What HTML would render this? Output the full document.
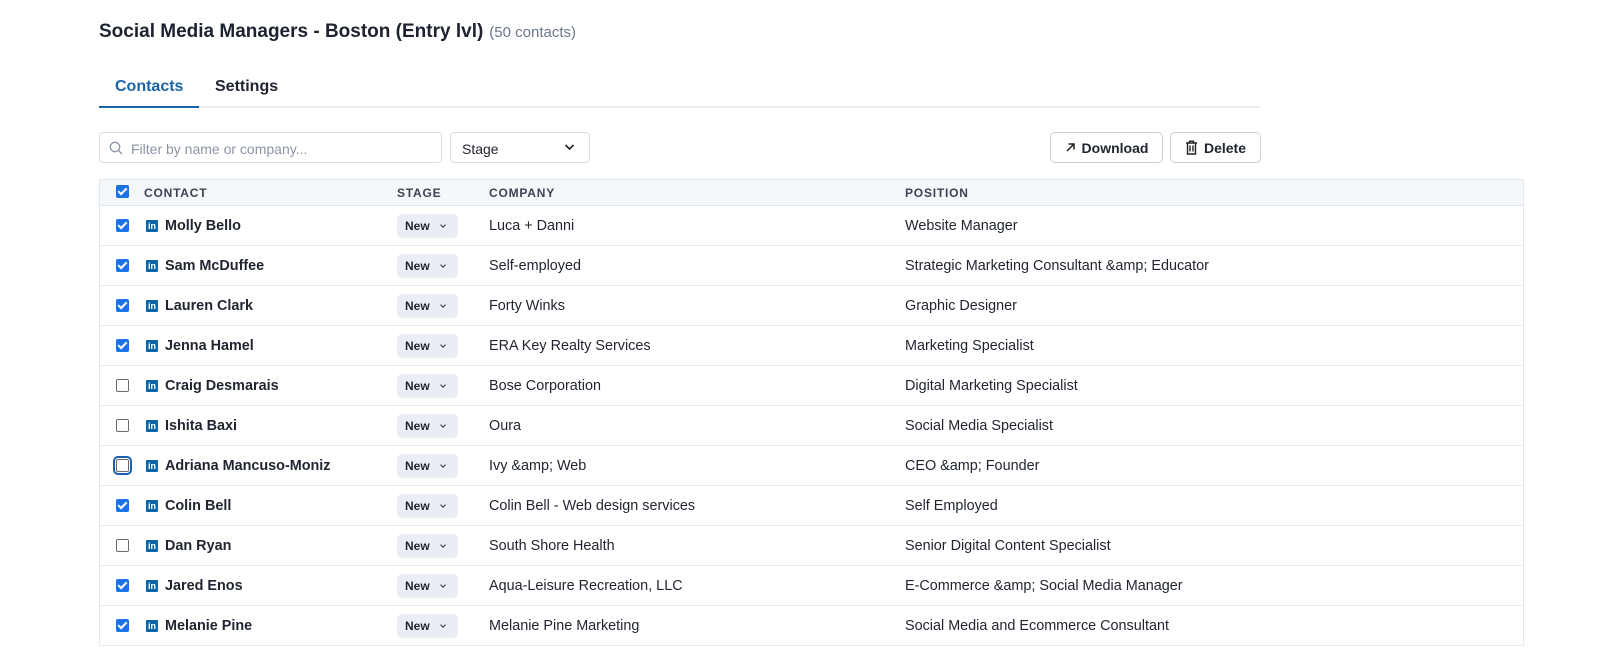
<!DOCTYPE html>
<html><head><meta charset="utf-8"><style>
*{box-sizing:border-box;margin:0;padding:0}
body{width:1601px;height:661px;background:#fff;font-family:"Liberation Sans",sans-serif;color:#1f2430;position:relative;overflow:hidden}
.t{position:absolute;left:99px;top:21px;font-size:19px;font-weight:bold;color:#1c2230}
.t span{font-weight:normal;font-size:15px;color:#6b7689;margin-left:6px}
.tabs{position:absolute;left:99px;top:106px;width:1161px;height:2px;background:#e8edf3}
.tab{position:absolute;top:78px;font-size:16px;font-weight:bold}
.ul{position:absolute;left:99px;top:106px;width:100px;height:2px;background:#1a64a8}
.in{position:absolute;top:132px;height:31px;border:1px solid #d7dee8;border-radius:4px;font-size:14px}
.btn{position:absolute;top:132px;height:31px;border:1px solid #c5d0dd;border-radius:5px;font-size:14px;font-weight:bold;display:flex;align-items:center;justify-content:center;gap:6px}
.tbl{position:absolute;left:99px;top:179px;width:1425px;border:1px solid #e3e8ef;border-bottom:none}
.row{height:40px;border-bottom:1px solid #e8ecf1;position:relative;font-size:14.4px}
.hd{height:26px;background:#f5f8fb;border-bottom:1px solid #e3e8ef;font-size:12px;font-weight:bold;letter-spacing:.8px;color:#3a4352}
.c{position:absolute;top:50%;transform:translateY(-50%);white-space:nowrap}
.cb{position:absolute;left:16px;top:50%;margin-top:-7px;width:13px;height:13px;border-radius:2px}
.on{background:#1a73e8}
.on:after{content:"";position:absolute;left:4px;top:1px;width:3px;height:7px;border:solid #fff;border-width:0 2px 2px 0;transform:rotate(45deg)}
.off{border:1px solid #6b6b6b;background:#fff}
.li{position:absolute;left:46px;top:50%;margin-top:-6px;width:12px;height:12px;background:#0b66a8;color:#fff;font-size:9px;font-weight:bold;line-height:13px;text-align:center;border-radius:1px}
.nm{left:65px;font-weight:bold}
.pill{position:absolute;left:297px;top:50%;margin-top:-12px;width:61px;height:24px;background:#eaeef4;border-radius:5px;font-size:12px;font-weight:bold;line-height:24px;padding-left:8px}
.pill:after{content:"";position:absolute;right:13px;top:9px;width:3px;height:3px;border:solid #333;border-width:0 1.5px 1.5px 0;transform:rotate(45deg)}
</style></head><body>
<div class="t">Social Media Managers - Boston (Entry lvl)<span>(50 contacts)</span></div>
<div class="tabs"></div><div class="ul"></div>
<div class="tab" style="left:115px;color:#1a64a8">Contacts</div>
<div class="tab" style="left:215px">Settings</div>
<div class="in" style="left:99px;width:343px;color:#8a94a6;padding:8px 0 0 31px">Filter by name or company...
<svg style="position:absolute;left:9px;top:8px" width="14" height="14" viewBox="0 0 14 14"><circle cx="6" cy="6" r="4.7" fill="none" stroke="#8a94a6" stroke-width="1.3"/><path d="M9.5 9.5L13 13" stroke="#8a94a6" stroke-width="1.3"/></svg></div>
<div class="in" style="left:450px;width:140px;padding:8px 0 0 11px">Stage
<svg style="position:absolute;right:14px;top:10px" width="11" height="8" viewBox="0 0 11 8"><path d="M1.5 2L5.5 6 9.5 2" fill="none" stroke="#222" stroke-width="1.6"/></svg></div>
<div class="btn" style="left:1050px;width:113px"><svg width="11" height="11" viewBox="0 0 11 11"><path d="M2 9L9 2M3.5 2H9V7.5" fill="none" stroke="#222" stroke-width="1.5"/></svg>Download</div>
<div class="btn" style="left:1170px;width:91px"><svg width="13" height="15" viewBox="0 0 13 15"><path d="M1 3H12M4.5 3V1.2H8.5V3M2.5 3V14H10.5V3M5 5.5V11.5M8 5.5V11.5" fill="none" stroke="#222" stroke-width="1.4"/></svg>Delete</div>
<div class="tbl">
<div class="row hd"><div class="cb on" style="margin-top:-8px"></div><div class="c" style="left:44px">CONTACT</div><div class="c" style="left:297px">STAGE</div><div class="c" style="left:389px">COMPANY</div><div class="c" style="left:805px">POSITION</div></div>
<div class="row"><div class="cb on"></div><div class="li">in</div><div class="c nm">Molly Bello</div><div class="pill">New</div><div class="c" style="left:389px">Luca + Danni</div><div class="c" style="left:805px">Website Manager</div></div>
<div class="row"><div class="cb on"></div><div class="li">in</div><div class="c nm">Sam McDuffee</div><div class="pill">New</div><div class="c" style="left:389px">Self-employed</div><div class="c" style="left:805px">Strategic Marketing Consultant &amp;amp; Educator</div></div>
<div class="row"><div class="cb on"></div><div class="li">in</div><div class="c nm">Lauren Clark</div><div class="pill">New</div><div class="c" style="left:389px">Forty Winks</div><div class="c" style="left:805px">Graphic Designer</div></div>
<div class="row"><div class="cb on"></div><div class="li">in</div><div class="c nm">Jenna Hamel</div><div class="pill">New</div><div class="c" style="left:389px">ERA Key Realty Services</div><div class="c" style="left:805px">Marketing Specialist</div></div>
<div class="row"><div class="cb off"></div><div class="li">in</div><div class="c nm">Craig Desmarais</div><div class="pill">New</div><div class="c" style="left:389px">Bose Corporation</div><div class="c" style="left:805px">Digital Marketing Specialist</div></div>
<div class="row"><div class="cb off"></div><div class="li">in</div><div class="c nm">Ishita Baxi</div><div class="pill">New</div><div class="c" style="left:389px">Oura</div><div class="c" style="left:805px">Social Media Specialist</div></div>
<div class="row"><div class="cb off" style="outline:2px solid #1a5fb4;outline-offset:1px"></div><div class="li">in</div><div class="c nm">Adriana Mancuso-Moniz</div><div class="pill">New</div><div class="c" style="left:389px">Ivy &amp;amp; Web</div><div class="c" style="left:805px">CEO &amp;amp; Founder</div></div>
<div class="row"><div class="cb on"></div><div class="li">in</div><div class="c nm">Colin Bell</div><div class="pill">New</div><div class="c" style="left:389px">Colin Bell - Web design services</div><div class="c" style="left:805px">Self Employed</div></div>
<div class="row"><div class="cb off"></div><div class="li">in</div><div class="c nm">Dan Ryan</div><div class="pill">New</div><div class="c" style="left:389px">South Shore Health</div><div class="c" style="left:805px">Senior Digital Content Specialist</div></div>
<div class="row"><div class="cb on"></div><div class="li">in</div><div class="c nm">Jared Enos</div><div class="pill">New</div><div class="c" style="left:389px">Aqua-Leisure Recreation, LLC</div><div class="c" style="left:805px">E-Commerce &amp;amp; Social Media Manager</div></div>
<div class="row"><div class="cb on"></div><div class="li">in</div><div class="c nm">Melanie Pine</div><div class="pill">New</div><div class="c" style="left:389px">Melanie Pine Marketing</div><div class="c" style="left:805px">Social Media and Ecommerce Consultant</div></div>
</div>
</body></html>
